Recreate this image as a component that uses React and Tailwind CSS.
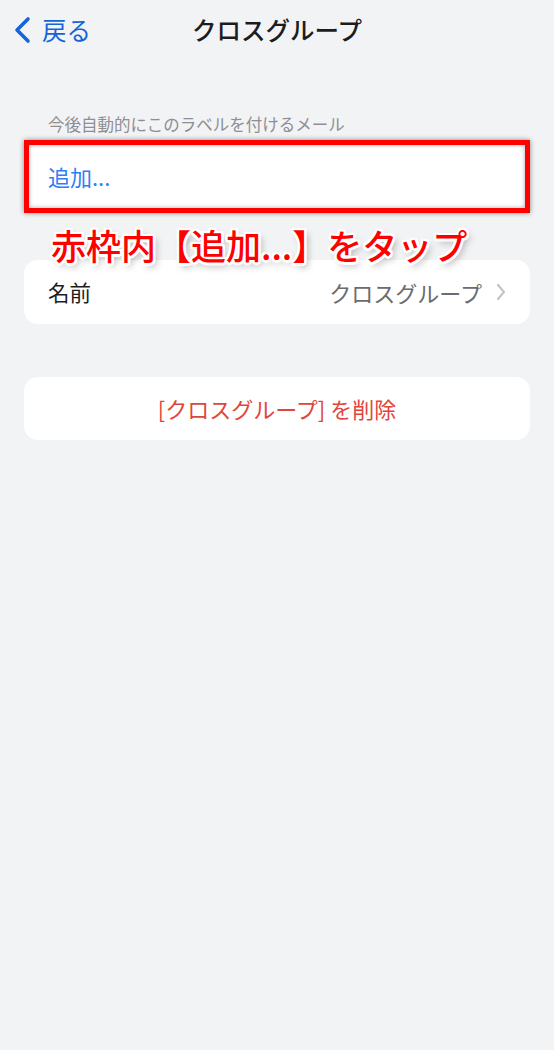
import React from "react";

export default function App() {
  const font = { fontFamily: '"Noto Sans CJK JP", "Noto Sans", sans-serif' };
  return (
    <div className="w-[554px] h-[1050px] bg-[#f2f3f5] flex flex-col" style={font}>
      {/* header */}
      <div className="relative h-[60px] flex items-center">
        <div className="absolute left-[12px] top-[15px] flex items-center gap-[10px]">
          <svg width="20" height="30" viewBox="0 0 20 30">
            <path d="M16 4 L5 15 L16 26" fill="none" stroke="#1565d8" strokeWidth="3.6" strokeLinecap="round" strokeLinejoin="round" />
          </svg>
          <span className="text-[24.5px] leading-[30px] text-[#1565d8]">戻る</span>
        </div>
        <div className="w-full text-center text-[24.5px] leading-[30px] font-medium text-[#1c1c1e]">クロスグループ</div>
      </div>

      {/* section label */}
      <div className="mt-[52px] px-[48px] text-[16.5px] leading-[24px] text-[#8e8e93]">今後自動的にこのラベルを付けるメール</div>

      {/* highlighted card */}
      <div className="mt-[4px] mx-[24px] h-[73px] bg-white border-[5px] border-[#ff0000] shadow-[0_0_5px_rgba(0,0,0,0.45),inset_0_0_4px_rgba(0,0,0,0.35)] flex items-center pl-[19px]">
        <span className="text-[22px] text-[#2f7ef5]">追加...</span>
      </div>

      {/* annotation */}
      <div className="relative z-10 h-[48px] pl-[51px] flex items-center mt-[8px]">
        <span
          className="text-[35px] leading-[48px] font-medium text-[#ff0000] whitespace-nowrap"
          style={{
            textShadow:
              "2.5px 0 0 #fff, -2.5px 0 0 #fff, 0 2.5px 0 #fff, 0 -2.5px 0 #fff, 2px 2px 0 #fff, -2px 2px 0 #fff, 2px -2px 0 #fff, -2px -2px 0 #fff, 3px 4px 7px rgba(0,0,0,0.35)",
          }}
        >
          赤枠内【追加...】をタップ
        </span>
      </div>

      {/* name card */}
      <div className="-mt-[9px] mx-[24px] h-[64px] bg-white rounded-[14px] flex items-center pl-[24px] pr-[24px]">
        <span className="text-[21.5px] text-[#1c1c1e]">名前</span>
        <span className="ml-auto text-[22px] text-[#6b6b70]">クロスグループ</span>
        <svg className="ml-[14px]" width="10" height="18" viewBox="0 0 10 18">
          <path d="M2 2 L8 9 L2 16" fill="none" stroke="#c4c4c8" strokeWidth="2.2" strokeLinecap="round" strokeLinejoin="round" />
        </svg>
      </div>

      {/* delete card */}
      <div className="mt-[53px] mx-[24px] h-[63px] bg-white rounded-[14px] flex items-center justify-center">
        <span className="text-[22px] text-[#e2453c]">[クロスグループ] を削除</span>
      </div>
    </div>
  );
}
